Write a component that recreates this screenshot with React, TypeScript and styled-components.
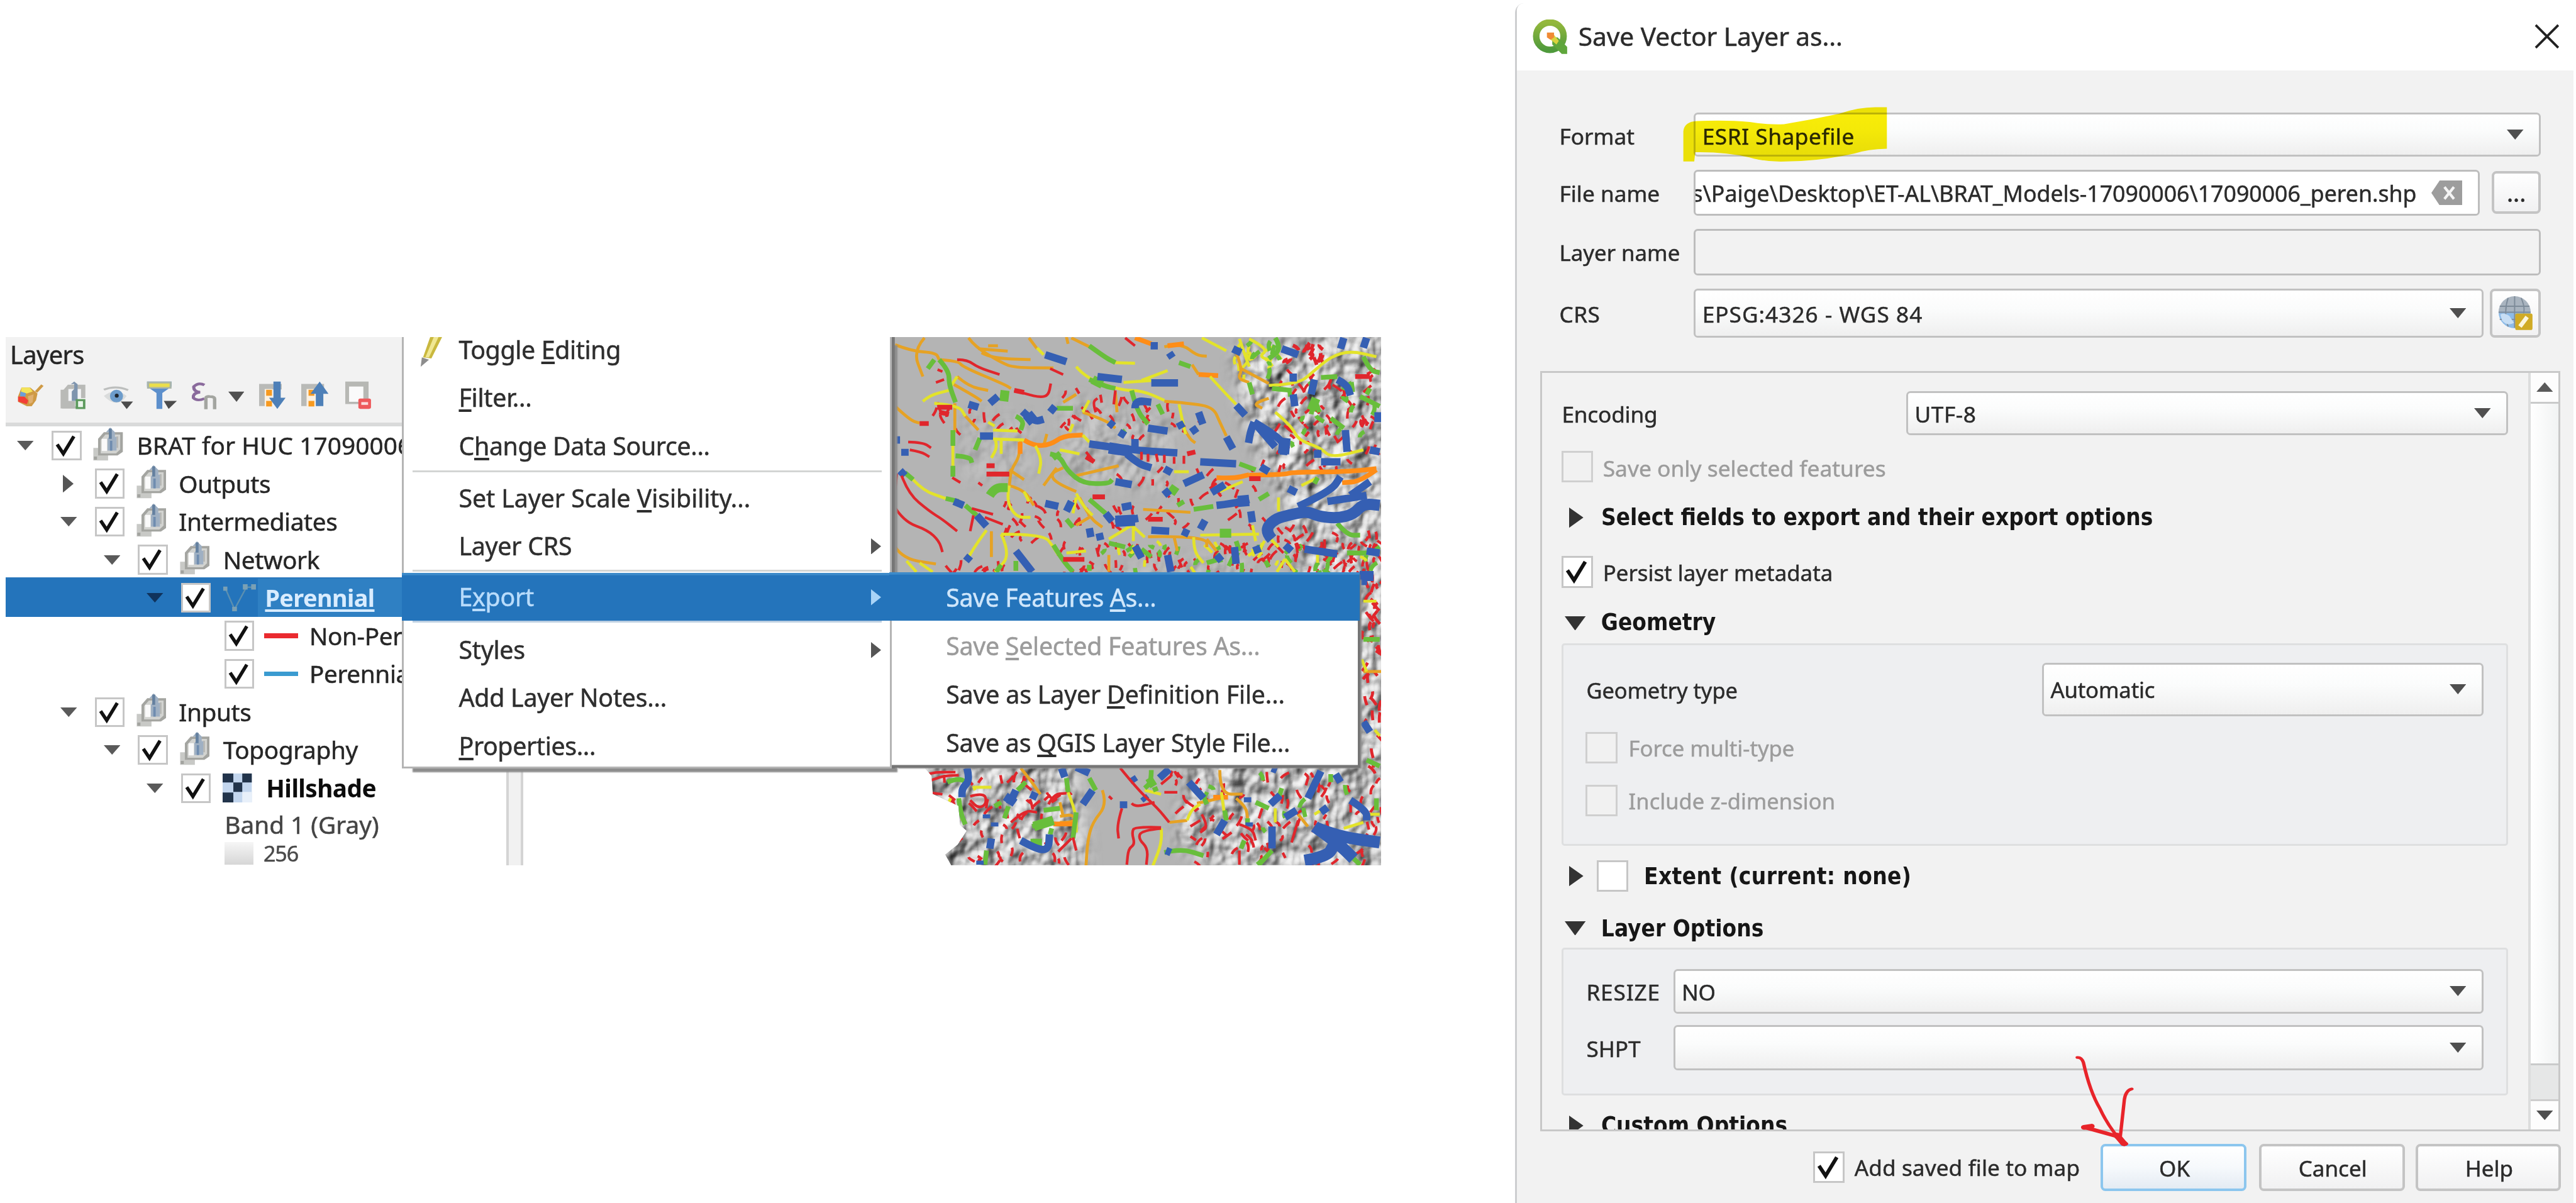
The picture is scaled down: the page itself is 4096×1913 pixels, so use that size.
import React from "react";
import styled, { createGlobalStyle, css } from "styled-components";

/* Design units are converted to window pixels in one place. */
const K = 4096 / 4330;
const u = (n: number) => `${(n * K).toFixed(2)}px`;

const UI = `"Noto Sans", "Open Sans", sans-serif`;
const BOLD = `"DejaVu Sans Condensed", "DejaVu Sans", "Noto Sans", sans-serif`;

const Global = createGlobalStyle`
  * { box-sizing: border-box; }
  html, body { margin: 0; background: #fff; }
  body { font-family: ${UI}; overflow: hidden; }
  svg { display: block; flex: none; }
`;

const Page = styled.main`
  width: ${u(4330)};
  height: ${u(2022)};
  display: flex;
  justify-content: space-between;
  padding: ${u(5)} ${u(4)} 0 ${u(9)};
  background: #fff;
  overflow: hidden;
`;

const Txt = styled.span<{ $s?: number; $ls?: number; $c?: string; $dy?: number; $b?: boolean; $ml?: number }>`
  font-size: ${(p) => u(p.$s ?? 41)};
  letter-spacing: ${(p) => u(p.$ls ?? 0)};
  color: ${(p) => p.$c ?? "#262626"};
  margin-top: ${(p) => u(p.$dy ?? 0)};
  margin-left: ${(p) => u(p.$ml ?? 0)};
  font-weight: ${(p) => (p.$b ? 700 : 400)};
  -webkit-text-stroke: ${(p) => (p.$b ? "0" : "0.5px")} currentColor;
  line-height: 1;
  white-space: pre;
  flex: none;
  u {
    text-decoration-thickness: ${u(4)};
    text-underline-offset: ${u(4)};
    text-decoration-skip-ink: none;
  }
`;

/* ---------- shared glyphs ---------- */

const TriBox = styled.svg<{ $w: number; $h: number }>`
  width: ${(p) => u(p.$w)};
  height: ${(p) => u(p.$h)};
`;

type Dir = "down" | "right" | "up";
const TRI: Record<Dir, string> = { down: "M0 0H10L5 10Z", right: "M0 0L10 5L0 10Z", up: "M5 0L10 10H0Z" };
const Tri = ({ dir = "down", w = 28, h = 16, fill = "#555" }: { dir?: Dir; w?: number; h?: number; fill?: string }) => (
  <TriBox $w={w} $h={h} viewBox="0 0 10 10" preserveAspectRatio="none">
    <path d={TRI[dir]} fill={fill} />
  </TriBox>
);

const CheckBox = styled.span<{ $size: number; $disabled?: boolean }>`
  width: ${(p) => u(p.$size)};
  height: ${(p) => u(p.$size)};
  border: ${u(4)} solid ${(p) => (p.$disabled ? "#cfcfcf" : "#c6c6c6")};
  background: ${(p) => (p.$disabled ? "#f1f1f1" : "#fff")};
  flex: none;
  svg { width: 100%; height: 100%; }
`;
const Check = ({ on = true, size = 50, disabled = false }: { on?: boolean; size?: number; disabled?: boolean }) => (
  <CheckBox $size={size} $disabled={disabled}>
    {on && (
      <svg viewBox="0 0 42 42">
        <path d="M6 19L16 34L33 6" fill="none" stroke="#111" strokeWidth="5.6" />
      </svg>
    )}
  </CheckBox>
);

/* ---------- layers panel ---------- */

const Capture = styled.section`
  position: relative;
  display: flex;
  width: ${u(2313)};
  height: ${u(888)};
  margin-top: ${u(562)};
  overflow: hidden;
`;

const Panel = styled.div`
  width: ${u(1489)};
  display: flex;
  flex-direction: column;
`;

const PanelHead = styled.header`
  width: ${u(667)};
  height: ${u(150)};
  background: #f2f2f2;
  border-bottom: ${u(7)} solid #d9dada;
  padding: ${u(9)} 0 0 ${u(6)};
`;

const ToolBar = styled.div`
  display: flex;
  align-items: flex-start;
  padding: ${u(22)} 0 0 ${u(15)};
`;

const Tool = styled.svg<{ $w: number; $h: number; $ml: number; $mt: number }>`
  width: ${(p) => u(p.$w)};
  height: ${(p) => u(p.$h)};
  margin: ${(p) => u(p.$mt)} 0 0 ${(p) => u(p.$ml)};
`;

/* Each tool glyph is drawn in a strip 2.45 by 3 times finer than the design unit. */
const strip = (x: number, y: number, w: number, h: number, from: number) => ({
  viewBox: `${x} ${y} ${w} ${h}`,
  preserveAspectRatio: "none",
  $w: w / 2.45,
  $h: h / 3,
  $ml: (x - from) / 2.45,
  $mt: (y - 62) / 3,
});

const Tools = () => (
  <ToolBar>
    <Tool {...strip(22, 76, 108, 116, 22)}>
      <path d="M38 96L74 96L104 126L98 160L80 190L60 190L24 168V140Z" fill="#cf9a45" />
      <path d="M38 96H72L84 116L60 126L36 118Z" fill="#f3e45a" />
      <path d="M34 116L56 124L54 142L32 140Z" fill="#6d9ed6" />
      <path d="M24 142L50 142L66 162L60 180L24 166Z" fill="#f23f36" />
      <path d="M98 118L124 84" stroke="#cf9a45" strokeWidth="12" />
      <path d="M64 140L88 130L84 170L70 178Z" fill="#e0b070" />
    </Tool>
    <Tool {...strip(197, 64, 107, 152, 130)}>
      <path d="M198 170V202H262V192H218V108H198Z" fill="#b9b9b6" />
      <path d="M204 116L228 82H300V150H258V202H204Z" fill="#b9bab7" />
      <path d="M230 104H282V164H230Z" fill="#f3f4f6" />
      <path d="M240 80L254 66L268 80V164H244V116L254 104V78Z" fill="#7f95ae" />
      <rect x="265" y="160" width="30" height="40" fill="#e9f5ea" stroke="#5d9a5d" strokeWidth="10" />
    </Tool>
    <Tool {...strip(373, 88, 124, 118, 304)}>
      <path d="M376 106Q424 82 476 108" fill="none" stroke="#bdbfbe" strokeWidth="10" />
      <path d="M376 138Q424 92 470 138Q430 206 376 138Z" fill="#dadcdc" />
      <ellipse cx="428" cy="138" rx="27" ry="32" fill="#6d9ccb" />
      <ellipse cx="429" cy="136" rx="8" ry="10" fill="#20262e" />
      <path d="M446 166H496L470 204Z" fill="#4c4c4c" />
    </Tool>
    <Tool {...strip(553, 64, 126, 142, 497)}>
      <path d="M555 66H656V92L618 124V204H594V124L555 92Z" fill="#5c8fcc" />
      <path d="M555 66H656V102H555Z" fill="#aab5a8" />
      <rect x="564" y="76" width="84" height="18" fill="#eade4c" />
      <path d="M624 164H678L644 204Z" fill="#4c4c4c" />
    </Tool>
    <Tool {...strip(738, 64, 104, 152, 679)}>
      <path d="M790 84Q766 68 746 92Q744 116 772 120Q742 124 744 148Q760 168 790 152" fill="none" stroke="#8a6a9c" strokeWidth="13" />
      <path d="M796 206V150Q796 140 812 142Q832 142 832 154V206" fill="none" stroke="#a3a5a0" strokeWidth="14" />
    </Tool>
    <Tool {...strip(888, 114, 66, 54, 842)}>
      <path d="M888 116H954L922 168Z" fill="#505050" />
    </Tool>
    <Tool {...strip(1015, 64, 114, 142, 954)}>
      <path d="M1015 78H1108V106H1040V190H1015Z" fill="#b9bab7" />
      <rect x="1038" y="104" width="32" height="88" fill="#fbf1e2" />
      <rect x="1044" y="108" width="24" height="30" fill="#f79a20" />
      <rect x="1044" y="164" width="24" height="28" fill="#f79a20" />
      <path d="M1074 66H1104V148H1124L1090 204L1056 148H1074Z" fill="#4e80b8" />
    </Tool>
    <Tool {...strip(1190, 64, 112, 142, 1129)}>
      <path d="M1190 78H1284V106H1214V190H1190Z" fill="#b9bab7" />
      <rect x="1212" y="104" width="38" height="88" fill="#fbf1e2" />
      <rect x="1220" y="108" width="24" height="30" fill="#f79a20" />
      <rect x="1220" y="164" width="24" height="28" fill="#f79a20" />
      <path d="M1250 190V128H1228L1266 66L1302 128H1281V190Z" fill="#4e80b8" />
    </Tool>
    <Tool {...strip(1370, 64, 107, 142, 1302)}>
      <path d="M1370 66H1466V180H1370Z M1386 92V168H1444V92Z" fill="#b7b8b4" fillRule="evenodd" />
      <rect x="1386" y="92" width="58" height="76" fill="#fafafa" />
      <rect x="1424" y="152" width="52" height="52" rx="8" fill="#ee5a5c" />
      <rect x="1436" y="170" width="28" height="14" fill="#fbdcdc" />
    </Tool>
  </ToolBar>
);

const TreeArea = styled.div`
  flex: 1;
  display: flex;
  width: ${u(871)};
  background: #fff;
`;
const Tree = styled.div`
  width: ${u(842)};
  height: ${u(738)};
  overflow: hidden;
`;
const Groove = styled.div`
  width: ${u(29)};
  background: #f1f1f1;
  border: solid #d4d4d4;
  border-width: 0 ${u(5)};
`;
const TreeRow = styled.div<{ $level: number; $selected?: boolean; $h?: number }>`
  display: flex;
  align-items: center;
  height: ${(p) => u(p.$h ?? 64)};
  padding-left: ${(p) => u(20 + 72.5 * p.$level)};
  ${(p) =>
    p.$selected &&
    css`
      background: #2474bb;
      box-shadow: 0 ${u(-2)} 0 #2474bb;
    `}
`;
const Cell = styled.span<{ $w: number }>`
  display: flex;
  align-items: center;
  width: ${(p) => u(p.$w)};
  flex: none;
`;
const Hot = styled.span`
  display: flex;
  align-items: center;
  align-self: stretch;
  width: ${u(300)};
  margin-left: ${u(-11)};
  padding-left: ${u(12)};
  background: #2f80c3;
`;
const LineSwatch = styled.i<{ $c: string }>`
  width: ${u(57)};
  height: ${u(8)};
  margin-left: ${u(-3)};
  background: ${(p) => p.$c};
`;
const Ramp = styled.i`
  width: ${u(49)};
  height: ${u(38)};
  background: linear-gradient(#f6f6f6, #d6d6d6);
`;
const Glyph = styled.svg<{ $w: number; $h: number; $mt?: number }>`
  width: ${(p) => u(p.$w)};
  height: ${(p) => u(p.$h)};
  margin-top: ${(p) => u(p.$mt ?? 0)};
`;

const GroupIcon = () => (
  <Glyph $w={50} $h={57} $mt={-6} viewBox="347 500 113 172" preserveAspectRatio="none">
    <path d="M348 606H368V640H404V670H348Z" fill="#c8c9c6" />
    <path d="M350 650H362V666H350Z" fill="#a2a39f" />
    <path d="M366 560L388 526H460V626L440 644H366Z" fill="#a4a5a1" />
    <path d="M376 566L394 538H450V614L434 634H376Z" fill="#d2d3d0" />
    <path d="M380 560H400V622H380Z" fill="#fafafa" />
    <path d="M436 548H442V606H436Z" fill="#b4b5b1" />
    <path d="M396 526L412 502L430 526V550H436V620H402V560L408 550V526Z" fill="#9fb0c3" />
    <path d="M407 508H418V560H407Z" fill="#64809f" />
    <path d="M411 570H420V620H411Z" fill="#6f8caf" />
  </Glyph>
);
const LineLayerIcon = () => (
  <Glyph $w={56} $h={46} viewBox="0 0 56 46">
    <path d="M5 8L20 42L40 5H52" fill="none" stroke="#5b8fb0" strokeWidth="2.5" />
    <g fill="#7aa0b4">
      <rect x="1" y="4" width="7" height="7" />
      <rect x="16" y="38" width="8" height="8" />
      <rect x="34" y="0" width="8" height="9" />
      <rect x="48" y="0" width="8" height="9" />
    </g>
  </Glyph>
);
const RasterIcon = () => (
  <Glyph $w={49} $h={49} viewBox="0 0 49 49">
    <rect width="49" height="49" fill="#c3d6ee" />
    <path d="M0 0h18v15H0zM33 0h16v15H33zM18 15h15v16H18zM0 32h18v17H0z" fill="#22344b" />
    <path d="M33 31h16v18H33z" fill="#e8f0fa" />
  </Glyph>
);

type Node = { level: number; label: string; open?: "down" | "right"; kind: string };
const NODES: Node[] = [
  { level: 0, label: "BRAT for HUC 17090006", open: "down", kind: "group" },
  { level: 1, label: "Outputs", open: "right", kind: "group" },
  { level: 1, label: "Intermediates", open: "down", kind: "group" },
  { level: 2, label: "Network", open: "down", kind: "group" },
  { level: 3, label: "Perennial", open: "down", kind: "selected" },
  { level: 4, label: "Non-Perennial", kind: "#ea2a2f" },
  { level: 4, label: "Perennial", kind: "#3a9bd0" },
  { level: 1, label: "Inputs", open: "down", kind: "group" },
  { level: 2, label: "Topography", open: "down", kind: "group" },
  { level: 3, label: "Hillshade", open: "down", kind: "raster" },
];

const LayersPanel = () => (
  <Panel>
    <PanelHead>
      <Txt $s={42} $ls={-0.6} $ml={2}>Layers</Txt>
      <Tools />
    </PanelHead>
    <TreeArea>
      <Tree>
        {NODES.map((n, i) => {
          const sel = n.kind === "selected";
          return (
            <TreeRow key={i} $level={n.level} $selected={sel}>
              <Cell $w={58}>
                {n.open === "down" && <Tri fill={sel ? "#10335c" : "#5a5a5a"} />}
                {n.open === "right" && (
                  <Cell $w={30}>
                    <Space $w={4} />
                    <Tri dir="right" w={18} h={30} />
                  </Cell>
                )}
              </Cell>
              <Cell $w={70}>
                <Check />
              </Cell>
              <Cell $w={70}>
                {n.kind === "group" && <GroupIcon />}
                {sel && <LineLayerIcon />}
                {n.kind === "raster" && <RasterIcon />}
                {n.kind[0] === "#" && <LineSwatch $c={n.kind} />}
              </Cell>
              {sel ? (
                <Hot>
                  <Txt $s={40} $b $ls={-0.6} $c="#d9ecff"><u>{n.label}</u></Txt>
                </Hot>
              ) : (
                <Txt
                  $s={41}
                  $ml={n.level === 1 ? 1 : 3}
                  $b={n.kind === "raster"}
                  $c={n.kind === "raster" ? "#0c0c0c" : undefined}
                  $ls={n.kind === "raster" ? -0.6 : n.level === 0 ? 0.1 : -0.4}
                >
                  {n.label}
                </Txt>
              )}
            </TreeRow>
          );
        })}
        <TreeRow $level={4.81} $h={58}>
          <Txt $s={41} $c="#444">Band 1 (Gray)</Txt>
        </TreeRow>
        <TreeRow $level={4.8} $h={40}>
          <Cell $w={66}>
            <Ramp />
          </Cell>
          <Txt $s={36} $ls={-1.2} $c="#4a4a4a">256</Txt>
        </TreeRow>
      </Tree>
      <Groove />
    </TreeArea>
  </Panel>
);

/* ---------- map ---------- */

const MapSvg = styled.svg`
  width: ${u(824)};
  height: ${u(888)};
`;

const C = { o: "#e6a224", O: "#ff8d17", y: "#e3e32a", g: "#68be3b", b: "#355fb3", r: "#e0262c" };

const UPPER: [string, number, string][] = [
  [C.o, 5, "M135 55L100 120L130 250M45 90L95 122L170 130L180 165M270 55L290 100L370 180L410 205L530 207M300 110L390 122M310 130L340 158L460 165M330 95L360 95M180 165L240 172L250 200L380 290L400 310M235 250L270 300L330 320M225 290L290 350L310 375M45 400L90 470L120 485M228 385L228 530M255 440L300 520M395 720L440 770M430 570L428 650L400 720L395 800M395 800L440 820L470 900M585 55L640 100M570 50L575 85M455 55L480 110M955 190L975 240M870 100L920 80L970 145L1000 147M1090 130L1110 210L1095 260L1130 280M1105 210L1190 285M870 375L950 385L1020 405L1040 480L1060 550M920 480L945 560L965 585M820 1058L900 1055L1000 1070L1000 1110M805 920L950 935M600 830L540 790L520 740L560 710M540 710L500 800M610 860L640 960L680 1010M640 960L600 1000M340 1030L340 1160M45 1110L70 1170L170 1195M720 330L725 430M620 430L690 470L720 510M600 340L560 380M1190 360L1140 385L1170 410M600 750L690 715L730 700M500 600L510 540M700 1235L700 1150M1000 1070L1030 1130M900 1060L910 1130"],
  [C.O, 8, "M440 570L470 600L520 595L560 550L620 545M1030 760L1080 765L1130 745M975 240L1035 245M1130 748L1240 745L1260 732L1430 730L1520 715M1520 720L1470 780L1415 785M428 580L428 640M780 55L830 85M880 95L930 85"],
  [C.y, 5, "M480 105L500 140M600 200L630 260L740 320L800 320L870 370M720 180L780 183M745 280L830 270M800 270L880 220M130 375L150 345L210 320M235 250L215 300M165 385L240 395L260 450M345 520L420 525M345 565L440 570M222 600L222 700M100 770L130 825L200 865M395 800L385 870L415 960L460 960M325 1025L300 1080L270 1160M370 1045L500 1045L530 1110L545 1150M370 1045L400 1150L350 1235M980 1050L1160 1045M1010 250L1060 340L1090 390M1190 295L1280 290L1330 220L1380 150L1440 120L1520 150M1210 430L1260 500L1280 570L1350 610L1380 660L1480 620M475 600L495 660L485 740M350 560L360 600L340 660M370 570L370 640M770 1000L700 1070M770 1000L810 1060M775 1010L775 1080M1130 60L1190 110L1160 150L1200 170M550 620L610 640M620 545L640 580M915 390L925 470L935 540M600 840L620 900L650 950M600 860L590 940M1100 60L1130 200M640 370L620 430M985 55L1060 120M570 1140L630 1130M1220 860L1220 930M1040 830L1110 780M1290 800L1340 760M900 730L945 730M960 1060L960 1130L990 1190M1140 1000L1150 1080M1240 1170L1215 1235M1240 1170L1270 1235M80 1180L110 1235M120 1190L160 1235M590 490L580 530M330 480L350 500M440 830L455 880M1190 1060L1220 1110"],
  [C.g, 8, "M640 95L690 155L720 180M180 165L210 220L210 290L230 380M165 165L145 210M222 520L222 600M222 700L222 755M290 620L305 560M230 650L275 655L280 685M75 735L100 770M200 865L240 880M260 900L295 950M520 640L550 650L570 720L620 790L700 790L710 770M540 410L590 410M640 265L690 300L720 310M770 320L785 420L820 490M915 180L950 200M415 450L440 470L430 520M640 870L690 940M530 1100L560 1180L590 1235M415 1180L415 1230M1130 280L1140 340M1380 460L1420 510M1470 350L1530 400M1400 990L1430 1050L1470 1050M1320 440L1330 360L1345 430M1340 760L1330 790M1160 870L1190 840M910 900L930 880M1200 310L1260 320M1350 255L1400 250M1480 150L1500 220L1530 230M1100 690L1150 720M960 920L1020 905M740 520L750 540M850 390L865 440M1090 1080L1100 1130M700 1090L750 1110M800 1120L830 1160M1180 1180L1190 1210M1430 1140L1490 1140M1490 340L1500 310M570 970L590 1010M355 1235L370 1200M1000 1190L1040 1170M640 1200L640 1230M1210 55L1230 110L1190 160"],
  [C.g, 15, "M378 375L382 320M335 850L350 810L390 810M535 640L545 660M905 805L890 840M1320 420L1335 360M1040 1040L1075 1040M650 1100M650 265L680 290M840 390"],
  [C.b, 12.5, "M505 140L570 175M665 250L740 265M830 282L912 282M828 95L850 95M885 130L895 155M335 385L360 350M270 390L300 405M435 425L470 480L500 465M520 430L535 400M305 550L345 550M780 410L780 370L830 380M820 510L880 525M700 480L715 500M732 530L750 548M640 590L760 620L910 635M780 565L780 620M755 640L790 690L830 710M870 715L892 735M980 680L1090 690M1090 395L1118 445M1145 480L1135 520L1128 585M1145 480L1240 570L1235 645M1155 500L1210 605M1060 555L1080 615M1320 340L1330 265M1400 265L1430 290L1440 345M1265 340L1270 400M1230 110L1280 140M1420 55L1410 110M1490 55L1480 105M1265 235L1265 275M1165 705L1190 730M1425 520L1430 630M1340 620L1340 660M1280 905L1380 830L1410 755M1500 780L1440 850M1370 880L1490 850M1240 1100L1260 1130M1300 1120L1400 1145M1030 900L1080 890L1130 870M1015 835L1055 795M930 790L990 745M720 780L770 795M740 910L770 900M690 940L710 980M720 985L790 965M830 1025L885 1030M925 1030L945 1045M980 1020L995 975M505 890L545 905M570 930L585 880M640 1015L645 1060M670 1040L675 1075M225 880L255 900M295 950L325 1005M415 1130L465 1235M262 1180L275 1155M780 1105L800 1165M880 1150L890 1235M1085 1110L1090 1195M1150 1105L1158 1140M1135 930L1140 985M60 725L75 750M75 615L75 650M40 570L60 570M915 480L925 510M975 430L988 490M955 505L968 535M870 820L885 850M1250 815L1275 835M1500 620L1530 630M1490 1130L1530 1140M1525 430L1525 480M1350 680L1410 680M1080 110L1105 130M1030 1150L1045 1180"],
  [C.b, 19, "M1200 1070L1178 1030L1205 970L1260 945L1310 930L1340 955L1400 965L1450 945L1480 890L1530 900M450 440L470 480M700 610L760 625M1095 880L1130 875M720 980L780 975M1240 560L1235 640M790 375L790 395"],
  [C.r, 4.5, "M50 740L45 820M65 750L85 840L150 930L190 970L235 1030M40 900L70 980L145 1025L180 1080L190 1135M235 165L265 165L300 205L365 240M85 580L130 582L155 610M90 620L125 630L150 655M220 760L245 785M300 785L312 800M280 915L345 945M275 1030L285 950M320 960L375 995M520 210L560 240M410 320L450 340L490 355L515 345L522 285M175 215L190 225M170 280L195 265M630 630L655 680M750 55L780 95M660 430L650 380L665 360M720 320L715 390M820 640L820 680M845 640L850 680M870 645L870 685M900 655L900 690M930 650L930 690M800 630L800 670"],
  [C.r, 8, "M325 742L395 742M650 857L688 857M1130 765L1165 765M175 405L220 405M180 430L210 440M560 1172L625 1172M120 487L148 487M630 655L655 680M410 320L440 330M1455 250L1500 250M940 640L965 630M820 970L865 970M325 700L350 700"],
];

const LOWER: [string, number, string][] = [
  [C.o, 5, "M430 1040L460 1100L490 1170M680 1150L695 1220L650 1310L635 1400L630 1525M1040 1050L1040 1170L1110 1170M1040 1190L970 1215M1090 1190L1120 1230L1125 1290M550 1310L600 1310L590 1270L550 1280M550 1210L560 1280M1280 1270L1310 1330M1480 560L1535 560M885 1310L940 1300"],
  [C.O, 8, "M1020 1185L1065 1185M530 1318L600 1318"],
  [C.y, 5, "M285 1130L290 1150M290 1135L340 1135M575 1160L600 1260L600 1360M860 1340L865 1400L835 1525M940 1300L950 1250L980 1220M1210 1240L1210 1310M1420 1340L1480 1310M810 1150L860 1170M215 1190L205 1230M1045 1160L1055 1280M1480 210L1520 210M1475 500L1490 560M1515 850L1530 880M250 1270L250 1300M1330 1270L1350 1250M445 1110L430 1140M1490 1270L1530 1270"],
  [C.g, 8, "M205 1110L235 1090L265 1110M445 1110L420 1150M570 1090L575 1160M640 1090L660 1150M830 1050L830 1110L810 1140M240 1190L245 1260L260 1320M350 1230L370 1210M380 1290L392 1230M465 1330L530 1300M500 1250L550 1240M1150 1210L1190 1240M870 1460L920 1440L990 1475M325 1450L320 1520M1200 1450L1160 1520M1520 1190L1520 1250M1490 1000L1530 1030M1480 400L1530 400M1055 1250L1060 1300M1230 1140L1220 1190M1330 1110L1325 1150M1380 1070L1380 1110M600 1260L590 1390M525 1340L520 1370M1125 1290L1125 1330M850 1140L835 1150M1450 1490L1470 1520M1115 1400L1105 1440M1170 1500L1155 1520M990 1180L1000 1220"],
  [C.g, 16, "M470 1330L530 1300M460 1415L495 1415M820 1120L840 1100"],
  [C.b, 12.5, "M265 1040L275 1100L250 1140L250 1185M415 1150L395 1220M555 1040L565 1085M600 1035L640 1065M650 1150L620 1220M745 1205L745 1240M885 1045L855 1090M945 1110L990 1190M340 1390L335 1440M430 1400L480 1445L515 1445L518 1370M1055 1300L1030 1370M1200 1330L1200 1440M1240 1285L1275 1250M1225 1175L1195 1220M1350 1055L1310 1190M1440 1200L1490 1250L1490 1300M1350 1260L1370 1235M460 1170L480 1185M350 1310L350 1330M1125 1185L1125 1210M325 1270L325 1290M770 1085L780 1110M805 1180L815 1200M1130 1310L1130 1330M1200 1040L1215 1050M1395 1070L1410 1110M1480 130L1480 60M1500 60L1500 110M1480 810L1500 860M305 1500L305 1520M875 1450L890 1460"],
  [C.b, 20, "M1330 1330L1400 1410L1450 1490M1340 1340L1400 1380L1530 1410M1300 1500L1370 1480L1390 1420M390 1215L405 1180"],
  [C.r, 4.5, "M735 1040L790 1150L850 1240L885 1310M700 1180L710 1195M770 1215L780 1235L840 1210M740 1240L725 1320L730 1390M860 1335L780 1330L770 1360L780 1420L760 1440L755 1520M860 1340L800 1350L790 1390L820 1440L815 1520M115 1090L150 1060L230 1060M140 1160L190 1170M145 1110L180 1080L240 1075M275 1180L320 1160L325 1220L300 1240L275 1200M515 1220L530 1170L570 1165M590 1385L600 1450M585 1390L545 1455M985 1270L1005 1330L980 1360M950 1330L980 1300M1260 1410L1280 1300M1160 1290L1170 1240M1100 1320L1140 1340L1150 1400M1100 1450L1100 1520M400 1310L440 1250L480 1260M860 1120L890 1080M870 1160L910 1160"],
];

/* Rounds the corners of a polyline path so that the streams bend. */
const bend = (d: string) =>
  d
    .split("M")
    .filter(Boolean)
    .map((part) => {
      const p = part.split("L").map((s) => s.trim().split(" ").map(Number));
      let out = `M${p[0][0]} ${p[0][1]}`;
      for (let i = 1; i < p.length - 1; i++) {
        const mx = (p[i][0] + p[i + 1][0]) / 2;
        const my = (p[i][1] + p[i + 1][1]) / 2;
        out += `Q${p[i][0]} ${p[i][1]} ${mx} ${my}`;
      }
      const last = p[p.length - 1];
      return p.length > 1 ? out + `L${last[0]} ${last[1]}` : "";
    })
    .join("");

type Zone = [number, number, number, number, number, string, number];
/* left, top, right, bottom, count, colour, stroke width: short tributaries scattered over the hills */
const ZONES: Zone[] = [
  [560, 300, 760, 500, 14, C.r, 4.5],
  [170, 370, 420, 520, 12, C.r, 4.5],
  [1220, 200, 1520, 620, 60, C.r, 4.5],
  [1220, 240, 1520, 600, 14, C.g, 7],
  [1240, 60, 1360, 170, 14, C.r, 6],
  [680, 380, 1000, 560, 14, C.r, 4.5],
  [700, 700, 1180, 1000, 34, C.r, 4.5],
  [560, 1080, 1530, 1238, 95, C.r, 4.5],
  [680, 1080, 1530, 1238, 30, C.g, 7],
  [680, 1060, 1530, 1238, 16, C.y, 5],
  [380, 860, 640, 1060, 24, C.r, 4.5],
  [1200, 990, 1530, 1100, 24, C.r, 4.5],
  [1080, 60, 1220, 280, 14, C.y, 5],
  [1120, 60, 1250, 220, 8, C.g, 7],
  [180, 1170, 400, 1230, 9, C.r, 4.5],
  [1150, 660, 1500, 710, 8, C.r, 4.5],
];
const ZONES_LOW: Zone[] = [
  [130, 1050, 600, 1500, 60, C.r, 4.5],
  [890, 1050, 1535, 1510, 90, C.r, 4.5],
  [1476, 60, 1535, 1030, 36, C.r, 5],
  [1000, 1050, 1535, 1510, 8, C.g, 7],
];

const scatter = (zones: Zone[], seed: number) => {
  let s = seed;
  const rnd = () => ((s = (s * 16807) % 2147483647) / 2147483647);
  return zones.map(([l, t, r, b, n, c, w], i) => {
    let d = "";
    for (let k = 0; k < n; k++) {
      const x = l + rnd() * (r - l);
      const y = t + rnd() * (b - t);
      const a = (0.2 + rnd() * 0.6) * Math.PI;
      const len = 16 + rnd() * 20;
      const dx = Math.cos(a) * len;
      const dy = Math.sin(a) * len * 1.5;
      d += `M${x.toFixed(0)} ${y.toFixed(0)}q${(dx * 0.5 + rnd() * 16 - 8).toFixed(0)} ${(dy * 0.4).toFixed(0)} ${dx.toFixed(0)} ${dy.toFixed(0)}`;
    }
    return <path key={i} d={d} stroke={c} strokeWidth={w * K} vectorEffect="non-scaling-stroke" />;
  });
};
const strokes = (list: [string, number, string][]) =>
  list.map(([c, w, d], i) => <path key={i} d={bend(d)} stroke={c} strokeWidth={w * K} vectorEffect="non-scaling-stroke" />);

const LAND = "M0 0H824V888H101L91 870L112 853L127 830L116 820L113 788L70 768L68 738L45 710L38 680V660L0 640Z";

const StreamMap = () => (
  <MapSvg viewBox="0 0 824 888">
    <defs>
      <filter id="relief" x="0" y="0" width="100%" height="100%" colorInterpolationFilters="sRGB">
        <feTurbulence type="fractalNoise" baseFrequency="0.024 0.02" numOctaves="3" seed="7" />
        <feDiffuseLighting surfaceScale="12" diffuseConstant="1.12" lightingColor="#dcdcdc">
          <feDistantLight azimuth="225" elevation="52" />
        </feDiffuseLighting>
      </filter>
      <filter id="soft" x="-20%" y="-20%" width="140%" height="140%">
        <feGaussianBlur stdDeviation="14" />
      </filter>
      <mask id="hills">
        <g filter="url(#soft)">
          <path d="M580 20L840 -20V900H560L480 850L500 740L430 640L350 540H560L640 490L690 400L660 280L620 200L590 120Z" fill="#fff" />
          <path d="M20 640H300L330 900H60Z" fill="#fff" />
          <path d="M280 100L480 140L460 260L300 240Z" fill="#555" />
          <path d="M320 400L600 360L600 460L350 480Z" fill="#444" />
          <path d="M120 130L240 130L240 240L120 240Z" fill="#333" />
        </g>
      </mask>
      <clipPath id="land">
        <path d={LAND} />
      </clipPath>
    </defs>
    <g clipPath="url(#land)">
      <rect width="824" height="888" fill="#b4b4b4" />
      <g mask="url(#hills)">
        <rect width="824" height="888" filter="url(#relief)" />
      </g>
      <g fill="none" strokeLinejoin="round">
        <g transform="translate(-18 -17) scale(0.54847 0.33333)">
          {scatter(ZONES, 4211)}
          {strokes(UPPER)}
        </g>
        <g transform="translate(-18 373) scale(0.54847 0.33806)">
          {scatter(ZONES_LOW, 977)}
          {strokes(LOWER)}
        </g>
      </g>
    </g>
  </MapSvg>
);

/* ---------- menus ---------- */

const Menu = styled.nav`
  position: absolute;
  top: 0;
  left: ${u(667)};
  width: ${u(823)};
  height: ${u(725)};
  background: #fff;
  border: solid #b4b4b4;
  border-width: 0 ${u(4)} ${u(4)} ${u(4)};
  box-shadow: ${u(5)} 0 0 #767676, ${u(14)} ${u(10)} ${u(2)} ${u(-4)} #8d8d8d;
`;
const SubMenu = styled(Menu)`
  top: ${u(395)};
  left: ${u(1487)};
  width: ${u(786)};
  height: ${u(325)};
  border-width: 0 0 ${u(2)} ${u(4)};
  box-shadow: ${u(4)} ${u(4)} 0 #757575, ${u(10)} ${u(9)} ${u(2)} ${u(-4)} #8d8d8d;
`;
const Item = styled.div<{ $h?: number; $pb?: number; $pt?: number; $on?: boolean; $pl?: number }>`
  display: flex;
  align-items: center;
  justify-content: space-between;
  height: ${(p) => u(p.$h ?? 81)};
  padding: ${(p) => u(p.$pt ?? 0)} ${u(15)} ${(p) => u(p.$pb ?? 0)} ${(p) => u(p.$pl ?? 92)};
  ${(p) =>
    p.$on &&
    css`
      background: #2474bb;
      margin: 0 ${u(-4)};
      padding-left: ${u((p.$pl ?? 92) + 4)};
      padding-right: ${u(19)};
      box-shadow: inset 0 ${u(4)} 0 #3d8bca;
    `}
`;
const Lead = styled.span`
  display: flex;
  width: ${u(66)};
  flex: none;
  align-self: flex-start;
`;
const Rule = styled.div<{ $h: number; $c?: string }>`
  height: ${(p) => u(p.$h)};
  margin: 0 ${u(14)};
  border-top: ${u(4)} solid ${(p) => p.$c ?? "#d3d5d4"};
`;

const SIZE = 41.6;
const Mt = ({ children, ls = -0.3, c = "#2e2e2e" }: { children: React.ReactNode; ls?: number; c?: string }) => (
  <Txt $s={SIZE} $ls={ls} $c={c}>{children}</Txt>
);

const ContextMenu = () => (
  <Menu>
    <Item $h={62} $pb={20} $pl={26}>
      <Lead>
        <Glyph $w={38} $h={50} viewBox="0 0 38 50">
          <path d="M18 0H38L20 36L6 34Z" fill="#c9b83e" />
          <path d="M24 0H32L16 34L10 34Z" fill="#f0e793" />
          <path d="M4 34L16 38L2 50Z" fill="#8d8d8d" />
        </Glyph>
      </Lead>
      <Mt ls={-0.4}>Toggle <u>E</u>diting</Mt>
      <Grow />
    </Item>
    <Item $pb={2}><Mt><u>F</u>ilter...</Mt></Item>
    <Item><Mt ls={-0.4}>C<u>h</u>ange Data Source...</Mt></Item>
    <Rule $h={6} />
    <Item><Mt ls={-0.1}>Set Layer Scale <u>V</u>isibility...</Mt></Item>
    <Item $h={80}><Mt>Layer CRS</Mt><Tri dir="right" w={17} h={27} /></Item>
    <Rule $h={5} />
    <Item $on $pt={2}><Mt c="#b9dcfb">E<u>x</u>port</Mt><Tri dir="right" w={17} h={27} fill="#a9d4f7" /></Item>
    <Rule $h={8} $c="#bccfe2" />
    <Item><Mt>Styles</Mt><Tri dir="right" w={17} h={27} /></Item>
    <Item><Mt>Add Layer Notes...</Mt></Item>
    <Item><Mt ls={-0.4}><u>P</u>roperties...</Mt></Item>
  </Menu>
);

const ExportMenu = () => (
  <SubMenu>
    <Item $on $pt={4} $pl={91}><Mt ls={-0.4} c="#cfe6fb">Save Features <u>A</u>s...</Mt></Item>
    <Item $pt={6} $pl={91}><Mt ls={-0.3} c="#9b9b9b">Save <u>S</u>elected Features As...</Mt></Item>
    <Item $pt={6} $pl={91}><Mt ls={-0.2}>Save as Layer <u>D</u>efinition File...</Mt></Item>
    <Item $pt={7} $pl={91}><Mt ls={-0.3}>Save as <u>Q</u>GIS Layer Style File...</Mt></Item>
  </SubMenu>
);

/* ---------- dialog ---------- */

const Dialog = styled.section`
  position: relative;
  width: ${u(1779)};
  height: ${u(2017)};
  display: flex;
  flex-direction: column;
  background: #f2f2f2;
  border-left: ${u(4)} solid #cdced0;
  border-top-left-radius: ${u(16)};
`;
const TitleBar = styled.header`
  display: flex;
  align-items: center;
  height: ${u(113)};
  padding: 0 ${u(24)} 0 ${u(26)};
  background: #fff;
  border-top-left-radius: ${u(12)};
  gap: ${u(14)};
`;
const Grow = styled.span`
  flex: 1;
`;
const Form = styled.div`
  display: grid;
  grid-template-columns: ${u(229)} ${u(1424)};
  padding: ${u(71)} 0 0 ${u(68)};
`;
const Label = styled.label<{ $h: number }>`
  display: flex;
  align-items: center;
  height: ${(p) => u(p.$h)};
`;
const Field = styled.div<{ $h: number; $mb?: number }>`
  display: flex;
  align-items: center;
  justify-content: space-between;
  height: ${(p) => u(p.$h)};
  margin-bottom: ${(p) => u(p.$mb ?? 0)};
`;
const Combo = styled.div<{ $w: number; $h: number; $pl?: number }>`
  display: flex;
  align-items: center;
  justify-content: space-between;
  width: ${(p) => u(p.$w)};
  height: ${(p) => u(p.$h)};
  padding: 0 ${u(26)} 0 ${(p) => u(p.$pl ?? 8)};
  border: ${u(4)} solid #c1c1c1;
  border-radius: ${u(7)};
  background: linear-gradient(#fff, #fbfcfc 40%, #efefef);
  flex: none;
`;
const Input = styled(Combo)<{ $off?: boolean }>`
  justify-content: flex-end;
  padding: 0 ${u(26)} 0 0;
  background: ${(p) => (p.$off ? "#f2f2f2" : "#fff")};
  border-color: #bdbdbd;
  overflow: hidden;
`;
const Button = styled.button<{ $w: number; $h: number; $primary?: boolean }>`
  display: flex;
  align-items: center;
  justify-content: center;
  width: ${(p) => u(p.$w)};
  height: ${(p) => u(p.$h)};
  padding: 0;
  font-family: inherit;
  border: ${u(5)} solid ${(p) => (p.$primary ? "#8cc6ee" : "#c4c4c4")};
  border-radius: ${u(8)};
  background: ${(p) => (p.$primary ? "linear-gradient(#fff, #f6f9fc 50%, #e4ebf3)" : "linear-gradient(#fff, #f1f1f2)")};
`;
const Scroll = styled.div`
  display: flex;
  width: ${u(1714)};
  height: ${u(1278)};
  margin: ${u(56)} 0 0 ${u(39)};
  border: ${u(4)} solid #c8c8c8;
`;
const Content = styled.div`
  flex: 1;
  height: 100%;
  overflow: hidden;
  padding-left: ${u(32)};
`;
const Bar = styled.div`
  display: flex;
  flex-direction: column;
  width: ${u(50)};
  border-left: ${u(5)} solid #dcdddd;
  background: #e6e7e7;
`;
const BarButton = styled.div`
  display: flex;
  align-items: center;
  justify-content: center;
  height: ${u(48)};
  background: #fdfdfd;
`;
const Thumb = styled.div`
  height: ${u(1116)};
  background: linear-gradient(90deg, #fff, #f1f3f3);
  border: solid #c9caca;
  border-width: ${u(4)} 0;
`;
const Gap = styled.div`
  flex: 1;
  border-bottom: ${u(4)} solid #cdcdcd;
`;
const Row = styled.div<{ $mt: number; $h: number; $pl?: number }>`
  display: flex;
  align-items: center;
  height: ${(p) => u(p.$h)};
  margin-top: ${(p) => u(p.$mt)};
  padding-left: ${(p) => u(p.$pl ?? 0)};
`;
const Group = styled.fieldset<{ $mt: number; $h: number }>`
  margin: ${(p) => u(p.$mt)} 0 0;
  width: ${u(1592)};
  height: ${(p) => u(p.$h)};
  padding: 0 0 0 ${u(36)};
  border: ${u(4)} solid #dedfe0;
  border-radius: ${u(5)};
  background: #eeeff1;
`;
const Footer = styled.footer`
  display: flex;
  align-items: center;
  height: ${u(79)};
  margin-top: ${u(21)};
  padding-left: ${u(497)};
`;
const Space = styled.span<{ $w: number }>`
  width: ${(p) => u(p.$w)};
  flex: none;
`;

type TProps = { children: React.ReactNode; s?: number; ls?: number; c?: string; dy?: number; ml?: number };
const T = ({ children, s = 37.2, ls = 0, c = "#2b2b2b", dy = 3, ml = 3 }: TProps) => (
  <Txt $s={s} $ls={ls} $c={c} $dy={dy} $ml={ml}>{children}</Txt>
);
const Head = styled(Txt)`
  font-family: ${BOLD};
`;
const H = ({ children, ls = 0, dy = 0 }: { children: React.ReactNode; ls?: number; dy?: number }) => (
  <Head $s={38.8} $ls={ls} $b $ml={4} $dy={dy} $c="#161616">{children}</Head>
);
const DownMark = () => <Tri w={28} h={17} fill="#4f4f4f" />;

const QLogo = () => (
  <Glyph $w={60} $h={58} viewBox="0 0 60 58">
    <defs>
      <linearGradient id="leaf" x1="0" y1="0" x2="0" y2="1">
        <stop offset="0" stopColor="#94b83c" />
        <stop offset="1" stopColor="#4f9a3c" />
      </linearGradient>
    </defs>
    <circle cx="29" cy="28" r="23" fill="none" stroke="url(#leaf)" strokeWidth="11" />
    <path d="M33 30H42L58 46V58H49L33 42Z" fill="#5fa63c" />
    <path d="M26 26H36L44 36L40 42L28 32Z" fill="#d9d33e" />
    <path d="M24 22H36V30L30 34L24 30Z" fill="#f08a35" />
  </Glyph>
);
const CloseX = () => (
  <Glyph $w={42} $h={42} viewBox="0 0 42 42">
    <path d="M2 2L40 40M40 2L2 40" stroke="#222" strokeWidth="4" />
  </Glyph>
);
const ClearIcon = () => (
  <Glyph $w={52} $h={42} viewBox="0 0 52 42">
    <path d="M0 21L14 0H52V42H14Z" fill="#9d9d9d" />
    <path d="M22 11L38 31M38 11L22 31" stroke="#f4f4f4" strokeWidth="4.5" />
  </Glyph>
);
const GlobeIcon = () => (
  <Glyph $w={60} $h={58} viewBox="0 0 60 58">
    <defs>
      <linearGradient id="globe" x1="0" y1="0" x2="0" y2="1">
        <stop offset="0.45" stopColor="#a9b4bf" />
        <stop offset="0.55" stopColor="#8dbbe8" />
      </linearGradient>
    </defs>
    <circle cx="29" cy="28" r="27" fill="url(#globe)" />
    <path d="M4 18H54M2 28H56M4 40H40M18 4Q10 28 18 52M29 1V54M40 4Q47 20 44 30" fill="none" stroke="#7d8b99" strokeWidth="2" />
    <path d="M5 32Q10 28 20 34L28 46Q16 52 8 42Z" fill="#c7def4" />
    <rect x="30" y="30" width="29" height="28" rx="3" fill="#d0ab25" />
    <path d="M38 52L50 36" stroke="#fbf6dd" strokeWidth="7" />
  </Glyph>
);

const Marks = styled.svg<{ $blend?: boolean }>`
  position: absolute;
  left: ${u(-4)};
  top: 0;
  width: ${u(1779)};
  height: ${u(2017)};
  pointer-events: none;
  mix-blend-mode: ${(p) => (p.$blend ? "multiply" : "normal")};
`;
const Annotations = () => (
  <>
    <Marks $blend viewBox="0 0 1779 2017">
      <g transform="translate(-7 -5) scale(0.57405 0.40816)">
        <path
          d="M505 664V540Q508 500 545 498Q630 492 700 502Q750 514 800 511Q880 492 960 468Q1020 440 1070 441H1101V612Q1045 614 1005 632Q900 665 790 665Q730 662 700 648Q630 624 540 626L537 664Z"
          fill="#f8ec08"
        />
      </g>
    </Marks>
    <Marks viewBox="0 0 1779 2017">
      <g transform="translate(883 1315) scale(0.57405 0.44763)" fill="none" stroke="#e8242a" strokeLinecap="round" strokeLinejoin="round">
        <path d="M108 1022Q120 1020 126 1040Q145 1150 175 1215Q200 1285 246 1350" strokeWidth="10" />
        <path d="M268 1140Q250 1145 246 1180Q240 1250 234 1320" strokeWidth="10" />
        <path d="M130 1284L220 1316L250 1346" strokeWidth="14" />
        <path d="M128 1284L150 1280" strokeWidth="18" />
        <path d="M224 1314L244 1344" strokeWidth="20" />
      </g>
    </Marks>
  </>
);

const GREY = "#9c9c9c";

const SaveDialog = () => (
  <Dialog>
    <TitleBar>
      <QLogo />
      <T s={43} ls={-0.1} dy={0}>Save Vector Layer as...</T>
      <Grow />
      <CloseX />
    </TitleBar>
    <Form>
      <Label $h={74}><T dy={5}>Format</T></Label>
      <Field $h={74} $mb={22}>
        <Combo $w={1424} $h={74}><T s={37.2} ls={0.6} dy={5}>ESRI Shapefile</T><DownMark /></Combo>
      </Field>
      <Label $h={78}><T>File name</T></Label>
      <Field $h={78} $mb={22}>
        <Input $w={1321} $h={78}>
          <T s={37.7}>{"s\\Paige\\Desktop\\ET-AL\\BRAT_Models-17090006\\17090006_peren.shp"}</T>
          <Space $w={25} />
          <ClearIcon />
        </Input>
        <Button $w={83} $h={72}><T s={40} dy={0} ml={0}>...</T></Button>
      </Field>
      <Label $h={78}><T s={36.8}>Layer name</T></Label>
      <Field $h={78} $mb={22}>
        <Input $w={1424} $h={78} $off />
      </Field>
      <Label $h={83}><T ls={0.4}>CRS</T></Label>
      <Field $h={83}>
        <Combo $w={1327} $h={83}><T ls={1.1}>EPSG:4326 - WGS 84</T><DownMark /></Combo>
        <Button $w={86} $h={83}><GlobeIcon /></Button>
      </Field>
    </Form>
    <Scroll>
      <Content>
        <Row $mt={30} $h={75}>
          <Cell $w={580}><T ml={1} ls={-0.2}>Encoding</T></Cell>
          <Combo $w={1012} $h={75}><T ls={0.6}>UTF-8</T><DownMark /></Combo>
        </Row>
        <Row $mt={26} $h={53}>
          <Check on={false} disabled size={53} />
          <Space $w={16} />
          <T c={GREY} s={37.4} dy={5} ml={1}>Save only selected features</T>
        </Row>
        <Row $mt={33} $h={53} $pl={13}>
          <Cell $w={50}><Tri dir="right" w={24} h={34} fill="#333" /></Cell>
          <H>Select fields to export and their export options</H>
        </Row>
        <Row $mt={38} $h={53}>
          <Check size={53} />
          <Space $w={16} />
          <T s={36.8} dy={5} ml={1}>Persist layer metadata</T>
        </Row>
        <Row $mt={33} $h={53} $pl={6}>
          <Cell $w={57}><Tri w={35} h={24} fill="#333" /></Cell>
          <H>Geometry</H>
        </Row>
        <Group $mt={7} $h={341}>
          <Row $mt={30} $h={90}>
            <Cell $w={769}><T s={36.4}>Geometry type</T></Cell>
            <Combo $w={742} $h={90}><T s={36.8} ls={-0.2}>Automatic</T><DownMark /></Combo>
          </Row>
          <Row $mt={26} $h={53}>
            <Space $w={2} />
            <Check on={false} disabled size={53} />
            <Space $w={16} />
            <T c={GREY} s={36.6} dy={4}>Force multi-type</T>
          </Row>
          <Row $mt={36} $h={53}>
            <Space $w={2} />
            <Check on={false} disabled size={53} />
            <Space $w={16} />
            <T c={GREY} s={36.4} ls={0.1} dy={4}>Include z-dimension</T>
          </Row>
        </Group>
        <Row $mt={24} $h={53} $pl={13}>
          <Cell $w={47}><Tri dir="right" w={24} h={34} fill="#333" /></Cell>
          <Check on={false} size={53} />
          <Space $w={22} />
          <H ls={0.4} dy={4}>Extent (current: none)</H>
        </Row>
        <Row $mt={35} $h={53} $pl={6}>
          <Cell $w={57}><Tri w={35} h={24} fill="#333" /></Cell>
          <H dy={2}>Layer Options</H>
        </Row>
        <Group $mt={6} $h={249}>
          <Row $mt={33} $h={75}>
            <Cell $w={149}><T ls={0.9}>RESIZE</T></Cell>
            <Combo $w={1362} $h={75}><T>NO</T><DownMark /></Combo>
          </Row>
          <Row $mt={19} $h={76}>
            <Cell $w={149}><T>SHPT</T></Cell>
            <Combo $w={1362} $h={76}><span /><DownMark /></Combo>
          </Row>
        </Group>
        <Row $mt={24} $h={53} $pl={13}>
          <Cell $w={50}><Tri dir="right" w={24} h={34} fill="#333" /></Cell>
          <H>Custom Options</H>
        </Row>
      </Content>
      <Bar>
        <BarButton><Tri dir="up" fill="#5a5a5a" /></BarButton>
        <Thumb />
        <Gap />
        <BarButton><Tri fill="#4f4f4f" /></BarButton>
      </Bar>
    </Scroll>
    <Footer>
      <Check size={53} />
      <Space $w={14} />
      <Cell $w={417}><T ls={0.1} dy={0}>Add saved file to map</T></Cell>
      <Button $w={245} $h={79} $primary><T s={37}>OK</T></Button>
      <Space $w={21} />
      <Button $w={245} $h={79}><T s={37}>Cancel</T></Button>
      <Space $w={18} />
      <Button $w={245} $h={79}><T s={37}>Help</T></Button>
    </Footer>
    <Annotations />
  </Dialog>
);

export default function App() {
  return (
    <>
      <Global />
      <Page>
        <Capture>
          <LayersPanel />
          <StreamMap />
          <ContextMenu />
          <ExportMenu />
        </Capture>
        <SaveDialog />
      </Page>
    </>
  );
}
